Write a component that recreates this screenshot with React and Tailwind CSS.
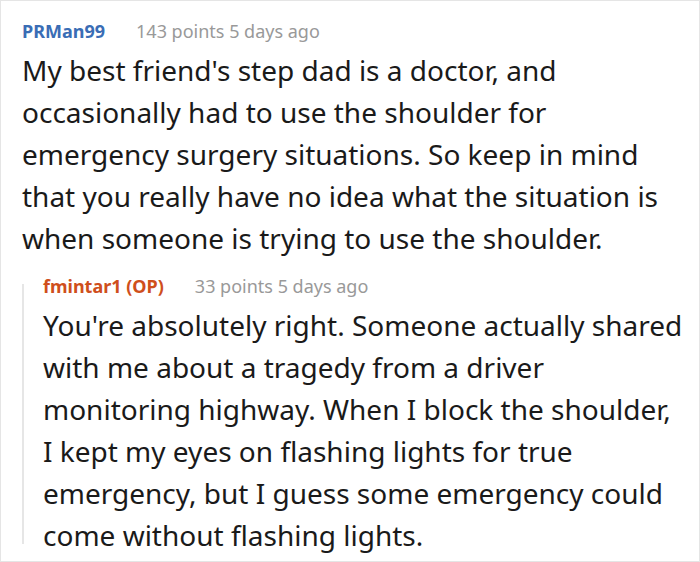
export default function App() {
  return (
    <div className="w-[700px] h-[562px] box-border border border-[#e5e5e5] bg-white overflow-hidden" style={{ fontFamily: '"Noto Sans", sans-serif' }}>
      <div className="pl-[21px] pr-[14px] pt-[17px]">
        <div className="flex items-center gap-[31px] h-[26px] text-[18px]">
          <span className="font-bold text-[#3a6db5]">PRMan99</span>
          <span className="text-[#999999]">143 points 5 days ago</span>
        </div>
        <p className="mt-[5px] text-[28px] leading-[42px] text-[#1a1a1a]">
          My best friend's step dad is a doctor, and occasionally had to use the shoulder for emergency surgery situations. So keep in mind that you really have no idea what the situation is when someone is trying to use the shoulder.
        </p>
        <div className="mt-[14px] flex">
          <div className="mt-[11px] h-[260px] w-[2px] shrink-0 bg-[#e6e6e6]" />
          <div className="pl-[19px] min-w-0 flex-1">
            <div className="flex items-center gap-[31px] h-[26px] text-[18px]">
              <span className="font-bold text-[#cf4f1c]">fmintar1 (OP)</span>
              <span className="text-[#999999]">33 points 5 days ago</span>
            </div>
            <p className="mt-[5px] text-[28px] leading-[42px] text-[#1a1a1a]">
              You're absolutely right. Someone actually shared with me about a tragedy from a driver monitoring highway. When I block the shoulder, I kept my eyes on flashing lights for true emergency, but I guess some emergency could come without flashing lights.
            </p>
          </div>
        </div>
      </div>
    </div>
  );
}
